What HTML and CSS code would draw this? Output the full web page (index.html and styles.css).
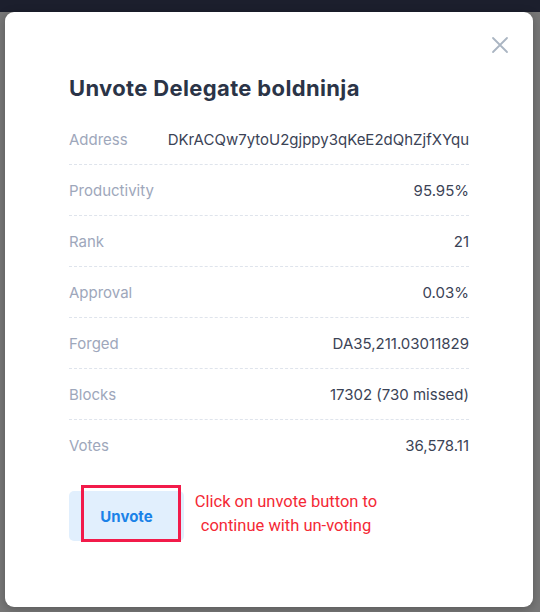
FILE: index.html
```html
<!DOCTYPE html>
<html>
<head>
<meta charset="utf-8">
<link rel="stylesheet" href="styles.css">
</head>
<body>
<div class="topbar"></div>
<div class="overlay">
  <div class="modal">
    <button class="close" aria-label="Close">
      <svg width="18" height="18" viewBox="0 0 18 18"><path d="M2 2 L16 16 M16 2 L2 16" stroke="#aab5c2" stroke-width="1.8" fill="none" stroke-linecap="round"/></svg>
    </button>
    <h1 class="title">Unvote Delegate boldninja</h1>
    <div class="rows">
      <div class="row"><span class="label">Address</span><span class="value">DKrACQw7ytoU2gjppy3qKeE2dQhZjfXYqu</span></div>
      <div class="row"><span class="label">Productivity</span><span class="value">95.95%</span></div>
      <div class="row"><span class="label">Rank</span><span class="value">21</span></div>
      <div class="row"><span class="label">Approval</span><span class="value">0.03%</span></div>
      <div class="row"><span class="label">Forged</span><span class="value">DA35,211.03011829</span></div>
      <div class="row"><span class="label">Blocks</span><span class="value">17302 (730 missed)</span></div>
      <div class="row last"><span class="label">Votes</span><span class="value">36,578.11</span></div>
    </div>
    <div class="actions">
      <div class="btnwrap">
        <button class="unvote">Unvote</button>
        <div class="highlight"></div>
      </div>
      <p class="note">Click on unvote button to<br>continue with un-voting</p>
    </div>
  </div>
</div>
</body>
</html>
```

FILE: styles.css
```css
* { box-sizing: border-box; }
html, body { margin: 0; padding: 0; }
body {
  width: 540px;
  height: 612px;
  overflow: hidden;
  background: #777777;
  font-family: "Inter", "Noto Sans", sans-serif;
}
.topbar {
  height: 12px;
  background: #1c1f2d;
}
.overlay {
  padding: 0 7px 0 5px;
}
.modal {
  position: relative;
  background: #ffffff;
  border-radius: 9px;
  height: 595px;
  padding: 63px 64px 0 64px;
  box-shadow: 0 2px 10px rgba(0,0,0,0.25);
}
.close {
  position: absolute;
  top: 24px;
  right: 24px;
  background: none;
  border: 0;
  padding: 0;
  width: 18px;
  height: 18px;
  cursor: pointer;
}
.close svg { display: block; }
.title {
  margin: 0 0 13px 0;
  font-size: 22px;
  font-weight: 700;
  color: #2b3447;
  letter-spacing: 0.35px;
  line-height: 26px;
}
.rows { display: flex; flex-direction: column; }
.row {
  display: flex;
  justify-content: space-between;
  align-items: center;
  height: 51px;
  border-bottom: 1px dashed #dfe4ec;
  font-size: 15px;
}
.row.last { border-bottom: 0; }
.label { color: #9ea7bb; }
.value { color: #3b4356; }
.actions {
  display: flex;
  align-items: center;
  margin-top: 20px;
}
.btnwrap {
  position: relative;
  width: 115px;
  height: 50px;
}
.unvote {
  width: 115px;
  height: 50px;
  border: 0;
  border-radius: 5px;
  background: #e1effd;
  color: #1a82e8;
  font-family: "Inter", sans-serif;
  font-weight: 700;
  font-size: 15px;
  cursor: pointer;
}
.highlight {
  position: absolute;
  left: 12px;
  top: -6px;
  width: 100px;
  height: 57px;
  border: 3px solid #f21b4a;
}
.note {
  margin: 0 0 0 7px;
  width: 190px;
  text-align: center;
  color: #f42935;
  font-family: "Roboto", sans-serif;
  font-size: 16.5px;
  line-height: 24px;
  position: relative;
  top: -2px;
}
```
